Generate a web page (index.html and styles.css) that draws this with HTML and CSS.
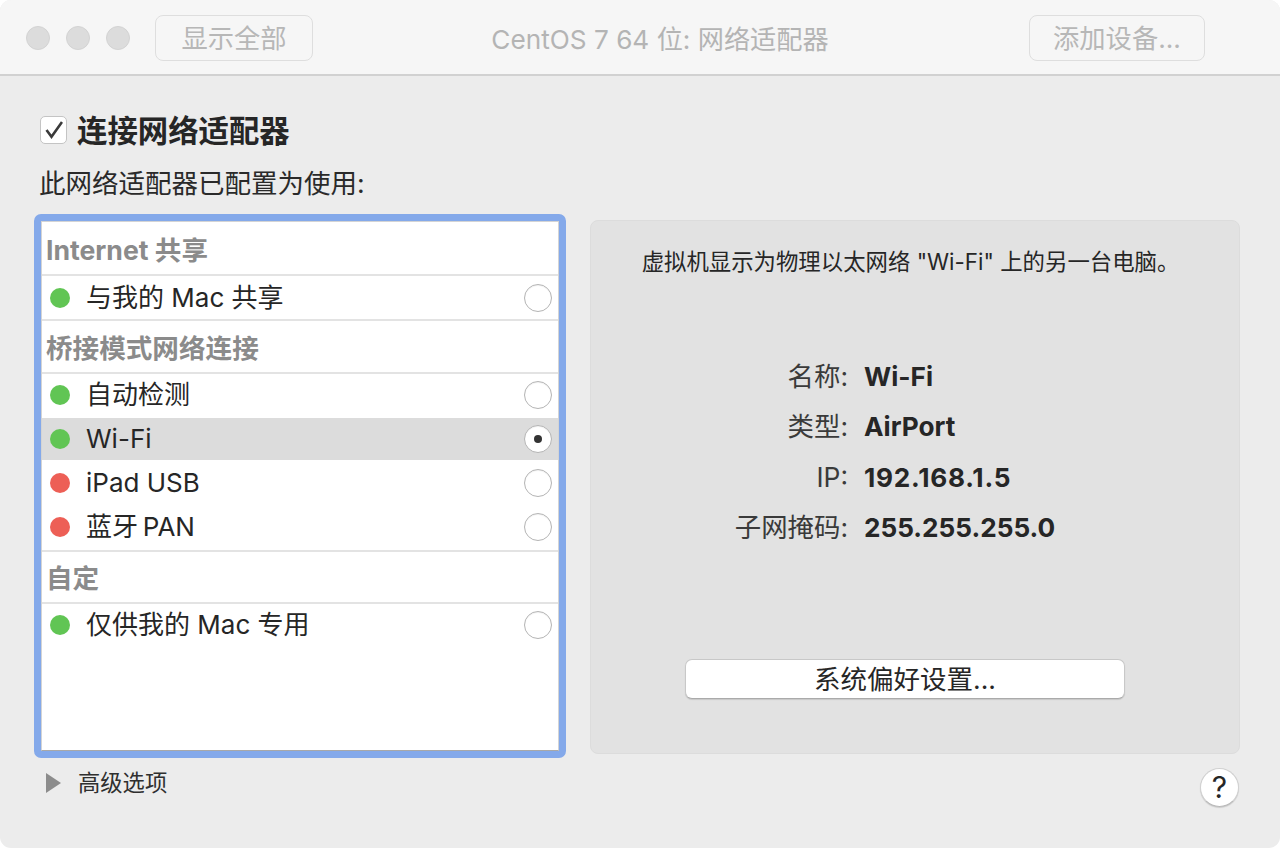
FILE: index.html
```html
<!DOCTYPE html>
<html lang="zh-CN">
<head>
<meta charset="utf-8">
<title>CentOS 7 64 位: 网络适配器</title>
<link rel="stylesheet" href="styles.css">
</head>
<body>
<div class="window">
  <header class="titlebar">
    <div class="lights"><span class="light"></span><span class="light"></span><span class="light"></span></div>
    <button class="tbtn tbtn-all">显示全部</button>
    <div class="title">CentOS 7 64 位: 网络适配器</div>
    <button class="tbtn tbtn-add">添加设备...</button>
  </header>
  <main class="content">
    <div class="connect">
      <span class="check"><svg width="18" height="18" viewBox="0 0 18 18"><path d="M1.5 9 L6.5 15.8 L17 1" fill="none" stroke="#3a3a3a" stroke-width="2.6"/></svg></span>
      <span class="connect-label">连接网络适配器</span>
    </div>
    <div class="subtitle">此网络适配器已配置为使用:</div>
    <div class="columns">
      <section class="list">
        <div class="ghead ghead-first">Internet 共享</div>
        <div class="row row-last"><span class="dot green"></span><span class="name">与我的 Mac 共享</span><span class="radio"></span></div>
        <div class="ghead ghead-bridge">桥接模式网络连接</div>
        <div class="row"><span class="dot green"></span><span class="name">自动检测</span><span class="radio"></span></div>
        <div class="row selected"><span class="dot green"></span><span class="name">Wi-Fi</span><span class="radio on"></span></div>
        <div class="row row-tall"><span class="dot red"></span><span class="name">iPad USB</span><span class="radio"></span></div>
        <div class="row row-last"><span class="dot red"></span><span class="name">蓝牙&#8201;PAN</span><span class="radio"></span></div>
        <div class="ghead ghead-custom">自定</div>
        <div class="row"><span class="dot green"></span><span class="name">仅供我的 Mac 专用</span><span class="radio"></span></div>
      </section>
      <section class="panel">
        <p class="desc">虚拟机显示为物理以太网络 "Wi-Fi" 上的另一台电脑。</p>
        <dl class="info">
          <dt>名称:</dt><dd>Wi-Fi</dd>
          <dt>类型:</dt><dd>AirPort</dd>
          <dt>IP:</dt><dd class="ip">192.168.1.5</dd>
          <dt>子网掩码:</dt><dd>255.255.255.0</dd>
        </dl>
        <button class="prefs">系统偏好设置...</button>
      </section>
    </div>
    <footer class="foot">
      <span class="tri"></span>
      <span class="adv">高级选项</span>
      <button class="help">?</button>
    </footer>
  </main>
</div>
</body>
</html>
```
FILE: styles.css
```css
* { box-sizing: border-box; }
html, body { margin: 0; padding: 0; background: #fff; }
body { font-family: Inter, "Noto Sans CJK SC", sans-serif; color: #262626; }
button { font-family: inherit; padding: 0; margin: 0; }
.window { width: 1280px; height: 848px; background: #ececec; border-radius: 11px; overflow: hidden; display: flex; flex-direction: column; }
.titlebar { height: 76px; flex: none; display: flex; align-items: center; background: #f6f6f6; border-bottom: 2px solid #d1d1d1; padding: 2px 75px 0 26px; }
.lights { display: flex; gap: 16px; }
.light { width: 24px; height: 24px; border-radius: 50%; background: #dcdcdc; border: 1px solid #d3d3d3; }
.tbtn { height: 46px; background: #f6f6f6; border: 1.5px solid #dedede; border-radius: 8px; font-size: 26.3px; color: #b7b7b7; padding-top: 2px; line-height: 42px; }
.tbtn-all { width: 158px; margin-left: 25px; }
.tbtn-add { width: 176px; }
.title { flex: 1; text-align: center; font-size: 26.2px; color: #b4b4b4; padding: 0 22px 0 0; }
.content { flex: 1; position: relative; padding: 40px 40px 0 34px; }
.connect { display: flex; align-items: center; margin-left: 6px; height: 28px; }
.check { width: 27px; height: 28px; flex: none; background: #fff; border: 1.5px solid #c4c4c4; border-radius: 5px; display: flex; align-items: center; justify-content: center; }
.connect-label { font-size: 30.4px; font-weight: 700; margin-left: 10px; line-height: 28px; padding-top: 2px; color: #262626; }
.subtitle { font-size: 26.5px; margin: 25px 0 0 5px; line-height: 28px; height: 28px; color: #2a2a2a; }
.columns { display: flex; gap: 24px; margin-top: 17px; align-items: flex-start; }
.list { width: 532px; height: 544px; flex: none; background: #fff; border: 7px solid #84a9ea; border-radius: 7px; position: relative; }
.list::after { content: ""; position: absolute; inset: 0; border: 1px solid #d4d4d4; border-bottom-color: #a8a8a8; pointer-events: none; }
.ghead { font-size: 26.6px; color: #8b8b8b; font-weight: 700; padding-left: 5px; display: flex; align-items: center; border-bottom: 2px solid #e3e3e3; }
.ghead-first { height: 55px; padding-top: 2px; }
.ghead-bridge { height: 53px; }
.ghead-custom { height: 52px; padding-left: 5px; padding-bottom: 1px; }
.row { height: 44px; display: flex; align-items: center; padding: 0 7px 2px 9px; }
.row-last { border-bottom: 2px solid #e3e3e3; height: 46px; }
.list > .row-last:nth-child(2) { height: 45px; padding-bottom: 0; }
.selected { background: #dcdcdc; height: 42px; padding-bottom: 0; }
.row-tall { height: 46px; padding-bottom: 0; }
.dot { width: 20px; height: 20px; border-radius: 50%; flex: none; }
.green { background: #61c554; }
.red { background: #ed5f56; }
.name { flex: 1; font-size: 26px; margin-left: 16px; color: #262626; line-height: 36px; height: 36px; }
.radio { width: 28px; height: 28px; border-radius: 50%; background: #fff; border: 1.5px solid #b4b4b4; flex: none; display: flex; align-items: center; justify-content: center; box-shadow: inset 0 1px 1px rgba(0,0,0,.06); }
.on::after { content: ""; width: 8px; height: 8px; border-radius: 50%; background: #333; }
.panel { width: 650px; height: 534px; margin-top: 6px; flex: none; background: #e2e2e2; border: 1px solid #dcdcdc; border-radius: 8px; display: flex; flex-direction: column; align-items: center; }
.desc { margin: 25px 9px 0 0; font-size: 22.4px; line-height: 32px; color: #262626; text-align: center; }
.info { margin: 80px 0 0; width: 100%; display: grid; grid-template-columns: 257px 1fr; column-gap: 16px; row-gap: 13px; font-size: 26.4px; line-height: 37.4px; }
.info dt { text-align: right; color: #3a3a3a; }
.info dd { margin: 0; font-weight: 700; color: #262626; font-size: 26.2px; }
.info .ip { letter-spacing: .75px; }
.prefs { width: 440px; height: 40px; margin: 112px 20px 0 0; background: #fff; border: 1px solid #c8c8c8; border-bottom-color: #aaa; border-radius: 7px; box-shadow: 0 1px 1px rgba(0,0,0,.12); font-size: 26.5px; color: #262626; line-height: 38px; }
.foot { display: flex; align-items: flex-start; margin-top: 10px; padding-left: 12px; }
.tri { width: 0; height: 0; margin-top: 5px; border-style: solid; border-width: 10px 0 10px 15px; border-color: transparent transparent transparent #8c8c8c; }
.adv { font-size: 22.3px; line-height: 30px; margin-left: 17px; color: #2f2f2f; }
.help { width: 39px; height: 39px; margin-left: auto; margin-right: 1px; border-radius: 50%; background: #fff; border: 1px solid #d0d0d0; border-bottom-color: #b8b8b8; box-shadow: 0 1px 1px rgba(0,0,0,.14); font-size: 30px; font-weight: 400; color: #262626; line-height: 37px; }
```
